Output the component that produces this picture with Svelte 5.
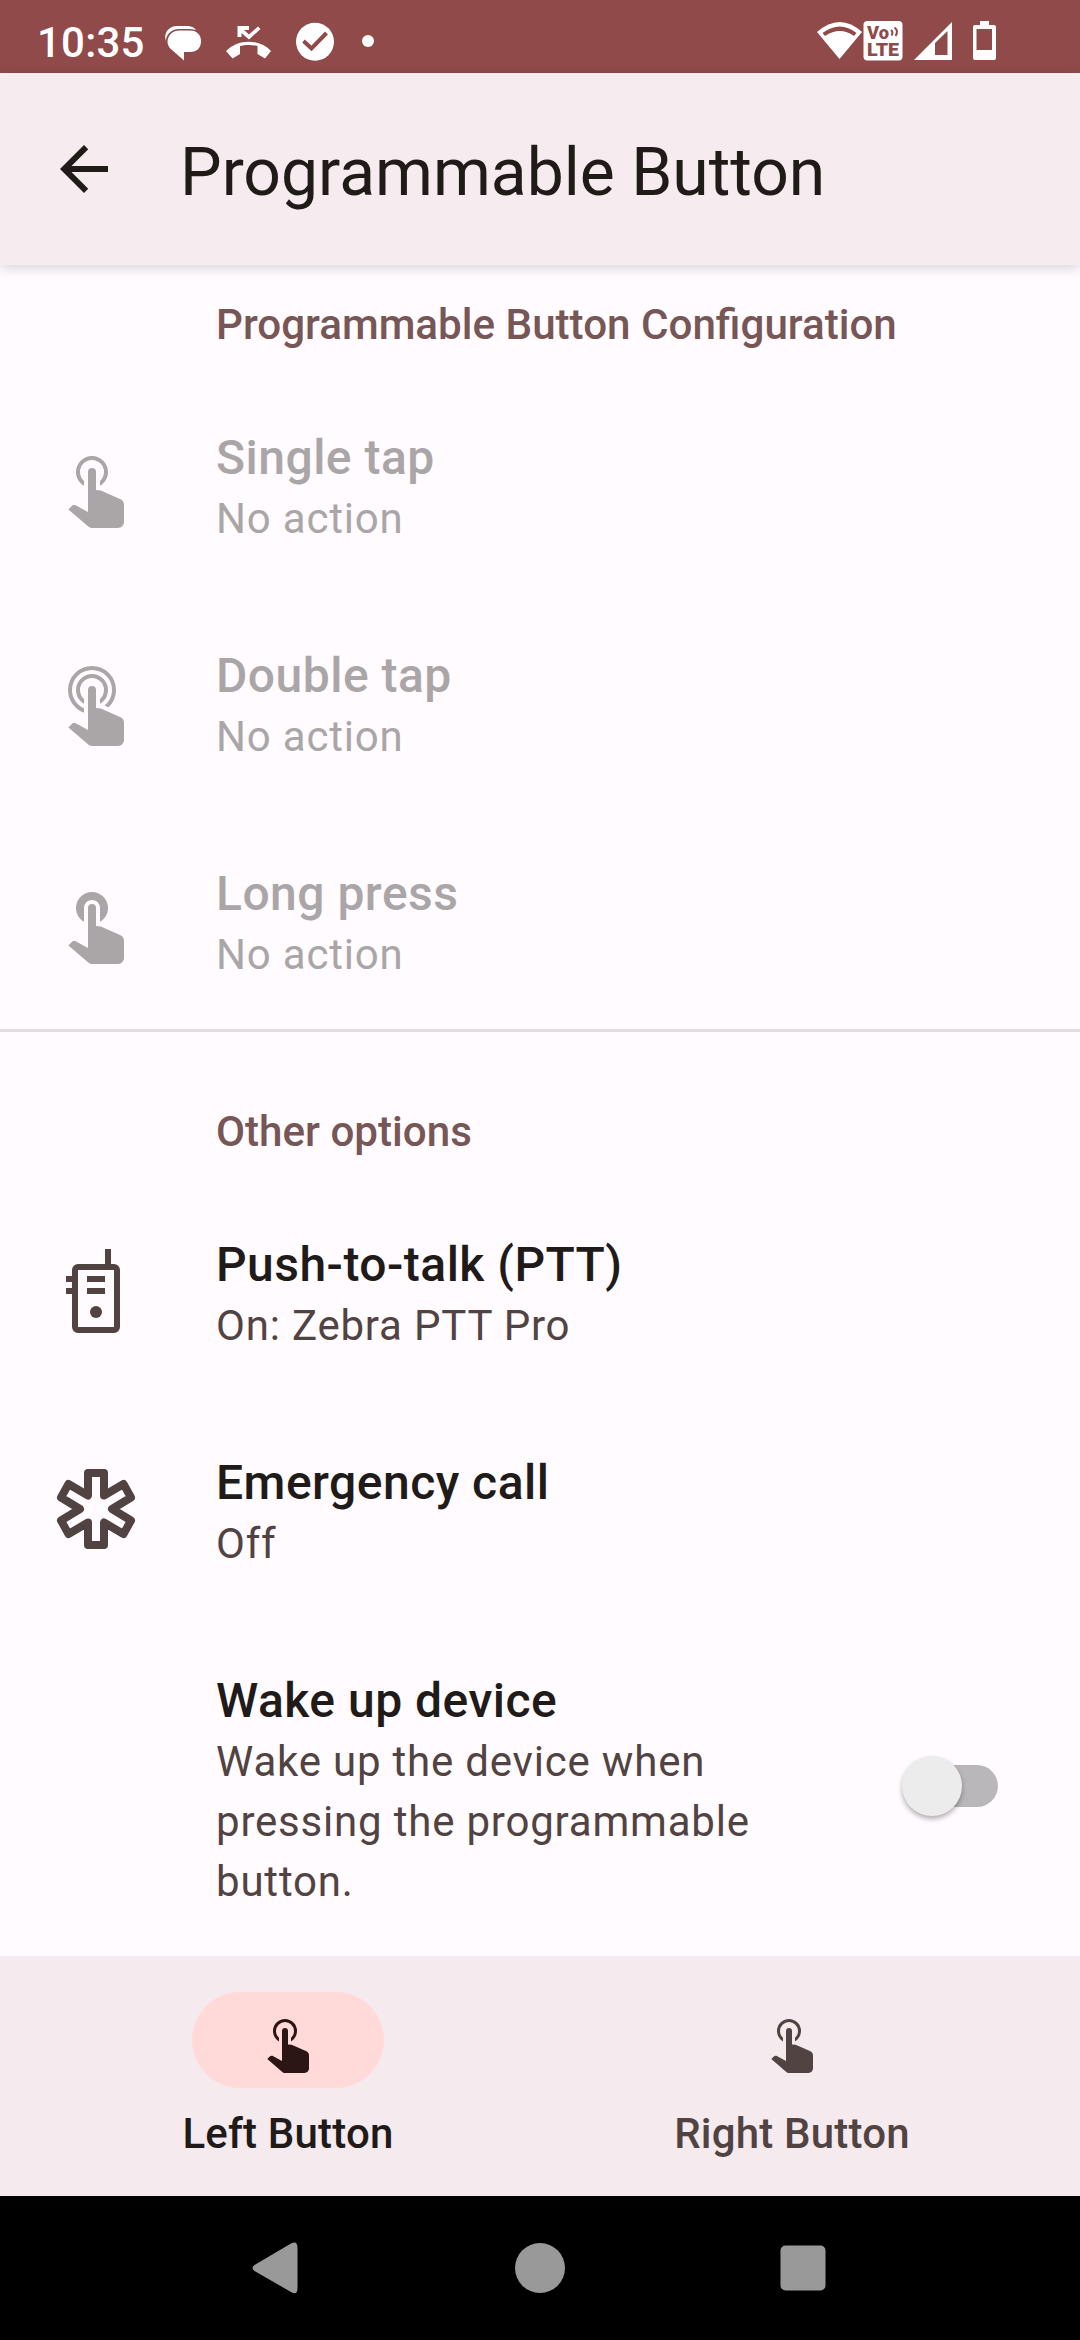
<script lang="ts">
	const tapHand =
		'M10,9A1,1 0 0,1 11,8A1,1 0 0,1 12,9V13.47L13.21,13.6L18.15,15.79C18.68,16.03 19,16.56 19,17.14V21.5C18.97,22.32 18.32,22.97 17.5,23H11C10.62,23 10.26,22.85 10,22.57L5.1,18.37L5.84,17.6C6.03,17.39 6.3,17.28 6.58,17.28H6.8L10,19V9Z';
	const tapRing =
		'M11,5A4,4 0 0,1 15,9C15,10.5 14.2,11.77 13,12.46V11.24C13.61,10.69 14,9.89 14,9A3,3 0 0,0 11,6A3,3 0 0,0 8,9C8,9.89 8.39,10.69 9,11.24V12.46C7.8,11.77 7,10.5 7,9A4,4 0 0,1 11,5Z';
	const outerRing =
		'M11,3A6,6 0 0,1 17,9C17,10.7 16.29,12.23 15.16,13.33L14.16,12.88C15.28,11.96 16,10.56 16,9A5,5 0 0,0 11,4A5,5 0 0,0 6,9C6,11.05 7.23,12.81 9,13.58V14.66C6.67,13.83 5,11.61 5,9A6,6 0 0,1 11,3Z';
	const holdRing =
		'M11,5A4,4 0 0,1 15,9C15,10.5 14.2,11.77 13,12.46V9A2,2 0 0,0 11,7A2,2 0 0,0 9,9V12.46C7.8,11.77 7,10.5 7,9A4,4 0 0,1 11,5Z';

	const actions = [
		{ title: 'Single tap', summary: 'No action', icon: tapHand + tapRing },
		{ title: 'Double tap', summary: 'No action', icon: tapHand + tapRing + outerRing },
		{ title: 'Long press', summary: 'No action', icon: tapHand + holdRing },
	];

	const tabs = ['Left Button', 'Right Button'];
	let activeTab = $state(0);
	let wakeUp = $state(false);
</script>

<div class="screen">
	<div class="status">
		<span class="clock">10:35</span>
		<svg class="notifications" viewBox="160 0 220 73">
			<path d="M166,41C163,33 169,26 177,26H187C191,26 195,28 196,30C193,29 191,29 188,29H179C171,29 166,35 166,41Z" />
			<path d="M179,30.500H190C197,30.500 201,35 201,41C201,48 197,52 190,52H184V60.500L172,50C163,43 169,30.500 179,30.500Z" />
			<path d="M226,51C238,38.500 259,38.500 271,51L265,58.500L257.500,54V46C252,44.500 245,44.500 240,46V54L232.500,58.500Z" />
			<path d="M237.500,26H249V30H244L249,34.500L258,26.500L260.500,29L249,39.500L241.500,33V37H237.500Z" />
			<circle cx="315" cy="41.700" r="19" />
			<path d="M303.500,41L311.500,48.500L326.500,33" class="check" />
			<circle cx="368" cy="41" r="6" />
		</svg>
		<svg class="system" viewBox="816 0 184 73">
			<path d="M817,32Q840,12 862,32L839.500,59Z" />
			<path d="M822.500,33Q840,20 856.500,33L854,36Q840,26 825,36Z" class="cut" />
			<rect x="863.500" y="21" width="39" height="39.500" rx="4" />
			<text x="867" y="39" textLength="22" lengthAdjust="spacingAndGlyphs" class="badge">Vo</text>
			<path d="M891,30Q893.500,32 891.500,35.500M894.500,27.500Q899,31 895.500,36" class="wave" />
			<text x="867" y="56" textLength="32" lengthAdjust="spacingAndGlyphs" class="badge">LTE</text>
			<path d="M914,60L952,22V60Z" />
			<path d="M935,43L947.500,31V55H935Z" class="cut" />
			<path d="M980,21H989V25H994Q996,25 996,27V58Q996,60 994,60H975Q973,60 973,58V27Q973,25 975,25H980Z" />
			<rect x="976.500" y="29" width="15.500" height="21" class="cut" />
		</svg>
	</div>

	<header>
		<svg class="back" viewBox="0 0 24 24"><path d="M20,11H7.830L13.420,5.410L12,4L4,12L12,20L13.410,18.590L7.830,13H20V11Z" /></svg>
		<h1>Programmable Button</h1>
	</header>

	<main>
		<h2>Programmable Button Configuration</h2>
		{#each actions as action}
			<div class="row disabled">
				<svg class="icon" viewBox="0 0 24 24"><path d={action.icon} /></svg>
				<div class="text">
					<div class="title">{action.title}</div>
					<div class="summary">{action.summary}</div>
				</div>
			</div>
		{/each}

		<h2 class="other">Other options</h2>
		<div class="row">
			<svg class="icon" viewBox="48 1243 96 96">
				<rect x="75" y="1267" width="42" height="63" rx="3" class="outline" />
				<path d="M105,1249H111V1266H105ZM66,1276H72V1282H66ZM66,1288H72V1294H66ZM87,1276H105V1282H87ZM87,1288H105V1294H87Z" />
				<circle cx="96" cy="1312" r="6" />
			</svg>
			<div class="text">
				<div class="title">Push-to-talk (PTT)</div>
				<div class="summary">On: Zebra PTT Pro</div>
			</div>
		</div>
		<div class="row">
			<svg class="icon" viewBox="48 1461 96 96">
				<path
					class="star"
					d="M88,1473H104V1495.500L123.500,1484L131,1497.500L112,1509L131,1520.500L123.500,1534L104,1522.500V1545H88V1522.500L68.500,1534L61,1520.500L80,1509L61,1497.500L68.500,1484L88,1495.500Z"
				/>
			</svg>
			<div class="text">
				<div class="title">Emergency call</div>
				<div class="summary">Off</div>
			</div>
		</div>
		<div class="row">
			<div class="icon"></div>
			<div class="text">
				<div class="title">Wake up device</div>
				<div class="summary">Wake up the device when pressing the programmable button.</div>
			</div>
			<button class="switch" class:on={wakeUp} aria-label="Wake up device" onclick={() => (wakeUp = !wakeUp)}>
				<span class="thumb"></span>
			</button>
		</div>
	</main>

	<nav>
		{#each tabs as tab, i}
			<button class="tab" class:active={activeTab === i} onclick={() => (activeTab = i)}>
				<span class="pill">
					<svg viewBox="0 0 24 24"><path d={tapHand + tapRing} /></svg>
				</span>
				<span class="label">{tab}</span>
			</button>
		{/each}
	</nav>

	<div class="system-nav">
		<svg viewBox="0 0 1080 144">
			<path d="M291,47.500Q297.500,44 297.500,52V92Q297.500,100 291,96L254.500,75Q250.500,72 254.500,69Z" />
			<circle cx="540" cy="72" r="25" />
			<rect x="780.500" y="49.500" width="45" height="45" rx="5" />
		</svg>
	</div>
</div>

<style>
	:global(body) {
		background: #fffbff;
	}

	.screen {
		display: flex;
		flex-direction: column;
		width: 1080px;
		height: 2340px;
		overflow: hidden;
		font-family: Roboto, sans-serif;
		color: #201a19;
		background: #fffbff;
	}

	svg {
		display: block;
		flex: none;
		fill: currentColor;
	}

	button {
		padding: 0;
		border: 0;
		background: none;
		font: inherit;
		color: inherit;
	}

	/* Status bar */
	.status {
		display: flex;
		flex: none;
		height: 73px;
		color: #fff;
		background: #904a4a;
	}

	.clock {
		width: 123px;
		padding: 18px 0 0 37px;
		font-size: 42px;
		font-weight: 500;
		line-height: 49px;
		letter-spacing: 0.2px;
	}

	.notifications {
		width: 220px;
		height: 73px;
	}

	.check {
		fill: none;
		stroke: #904a4a;
		stroke-width: 4;
	}

	.system {
		width: 184px;
		height: 73px;
		margin-left: 436px;
	}

	.cut,
	.badge {
		fill: #904a4a;
	}

	.badge {
		font-size: 18px;
		font-weight: 900;
	}

	.wave {
		fill: none;
		stroke: #904a4a;
		stroke-width: 2;
	}

	/* App bar */
	header {
		z-index: 1;
		display: flex;
		flex: none;
		align-items: center;
		height: 192px;
		background: #f6ecef;
		box-shadow: 0 3px 12px rgba(0, 0, 0, 0.16);
	}

	.back {
		width: 72px;
		height: 72px;
		margin: 0 60px 0 48px;
	}

	h1 {
		margin: 7px 0 0;
		font-size: 66px;
		font-weight: 400;
		line-height: 78px;
	}

	/* Preferences */
	main {
		flex: 1;
	}

	h2 {
		height: 50px;
		margin: 0;
		padding: 35px 0 25px 216px;
		font-size: 42.15px;
		font-weight: 500;
		line-height: 50px;
		color: #775656;
	}

	h2.other {
		padding-top: 75px;
		border-top: 3px solid #e3dde1;
	}

	.row {
		display: flex;
		height: 218px;
	}

	.icon {
		width: 96px;
		height: 96px;
		margin: 61px 72px 0 48px;
		color: #524343;
	}

	.text {
		width: 570px;
		padding-top: 55px;
	}

	.title {
		margin-bottom: 3px;
		font-size: 48px;
		font-weight: 500;
		line-height: 56px;
		letter-spacing: 0.48px;
	}

	.summary {
		font-size: 42px;
		line-height: 60px;
		letter-spacing: 0.8px;
		color: #524343;
	}

	.disabled .icon,
	.disabled .title,
	.disabled .summary {
		color: #aaa6a7;
	}

	.outline {
		fill: none;
		stroke: currentColor;
		stroke-width: 6;
	}

	.star {
		fill: none;
		stroke: currentColor;
		stroke-width: 8;
		stroke-linejoin: round;
	}

	.switch {
		width: 96px;
		height: 60px;
		margin: 138px 0 0 116px;
		padding: 9px 0 9px 11px;
	}

	.switch::before {
		content: '';
		display: block;
		height: 42px;
		border-radius: 21px;
		background: #bab7ba;
	}

	.thumb {
		display: block;
		width: 60px;
		height: 60px;
		margin: -51px 0 0 -11px;
		border-radius: 50%;
		background: #ececec;
		box-shadow: 0 3px 5px rgba(0, 0, 0, 0.3);
	}

	.switch.on .thumb {
		margin-left: 25px;
	}

	/* Bottom tabs */
	nav {
		display: flex;
		flex: none;
		justify-content: center;
		height: 240px;
		background: #f5ebee;
	}

	.tab {
		display: flex;
		flex-direction: column;
		align-items: center;
		width: 504px;
		padding-top: 36px;
		color: #524343;
	}

	.pill {
		display: flex;
		align-items: center;
		justify-content: center;
		width: 192px;
		height: 96px;
		border-radius: 48px;
	}

	.pill svg {
		width: 72px;
		height: 72px;
	}

	.active .pill {
		color: #2c1515;
		background: #ffdad9;
	}

	.label {
		margin-top: 21px;
		font-size: 42px;
		font-weight: 500;
		line-height: 50px;
		letter-spacing: 0.2px;
	}

	.active .label {
		color: #201a19;
	}

	.system-nav {
		flex: none;
		height: 144px;
		color: #999;
		background: #000;
	}
</style>
